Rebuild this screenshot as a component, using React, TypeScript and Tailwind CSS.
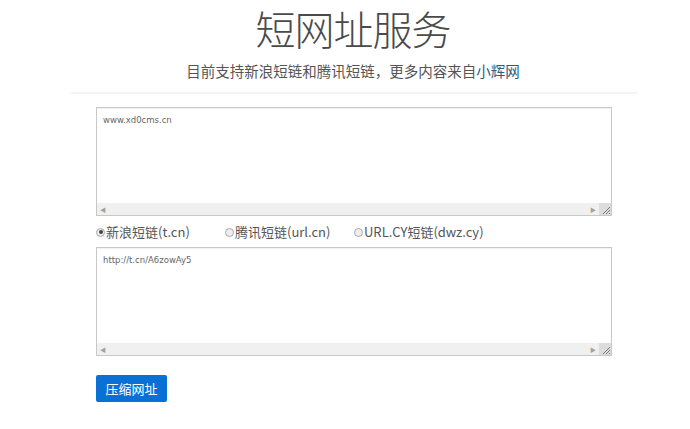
import React from "react";

const font = { fontFamily: '"Noto Sans CJK SC", "Noto Sans", sans-serif' };

function FakeTextarea({ text }: { text: string }) {
  return (
    <div className="ml-[96px] w-[516px] h-[109px] border border-[#c8c8c8] bg-white flex flex-col shadow-[inset_0_1px_1px_rgba(0,0,0,0.06)]">
      <div className="flex-1 px-[6px] pt-[6px] text-[8.5px] leading-[12px] text-[#666]" style={{ fontFamily: '"DejaVu Sans", sans-serif' }}>
        {text}
      </div>
      <div className="h-[12px] flex items-center bg-[#f0f0f0]">
        <span className="w-[12px] flex justify-center text-[6px] text-[#a0a0a0]">◀</span>
        <div className="flex-1" />
        <span className="w-[12px] flex justify-center text-[6px] text-[#a0a0a0]">▶</span>
        <div className="w-[12px] h-[12px] bg-[#dcdcdc] relative">
          <svg width="12" height="12" viewBox="0 0 12 12" className="absolute inset-0">
            <path d="M11 4 L4 11 M11 7 L7 11 M11 10 L10 11" stroke="#7a7a7a" strokeWidth="1" />
          </svg>
        </div>
      </div>
    </div>
  );
}

function Radio({ label, checked }: { label: string; checked?: boolean }) {
  return (
    <div className="w-[129px] shrink-0 flex items-center text-[13px] text-[#555] whitespace-nowrap">
      <span className="w-[9px] h-[9px] shrink-0 rounded-full border border-[#a8a8a8] bg-[#eee] flex items-center justify-center mr-[1px]">
        {checked && <span className="w-[4px] h-[4px] rounded-full bg-[#444]" />}
      </span>
      <span>{label}</span>
    </div>
  );
}

export default function App() {
  return (
    <div className="w-[690px] h-[429px] bg-white overflow-hidden" style={font}>
      <div className="flex flex-col items-center pl-[16px]">
        <h1 className="mt-[4px] text-[40px] leading-[48px] text-[#4a4a4a] font-light tracking-[-1px]">短网址服务</h1>
        <p className="mt-[9px] text-[14.5px] leading-[20px] text-[#555]">
          目前支持新浪短链和腾讯短链，更多内容来自<span className="text-[#2d5b82]">小辉网</span>
        </p>
      </div>
      <div className="ml-[71px] w-[566px] h-[2px] bg-[#f3f3f3] mt-[11px]" />
      <div className="mt-[13px]">
        <FakeTextarea text="www.xd0cms.cn" />
      </div>
      <div className="ml-[96px] mt-[6px] h-[20px] flex items-center">
        <Radio label="新浪短链(t.cn)" checked />
        <Radio label="腾讯短链(url.cn)" />
        <Radio label="URL.CY短链(dwz.cy)" />
      </div>
      <div className="mt-[5px]">
        <FakeTextarea text="http://t.cn/A6zowAy5" />
      </div>
      <div className="ml-[96px] mt-[19px]">
        <button className="w-[71px] h-[27px] bg-[#0b70d6] rounded-[2px] text-white text-[13px] flex items-center justify-center">
          压缩网址
        </button>
      </div>
    </div>
  );
}
